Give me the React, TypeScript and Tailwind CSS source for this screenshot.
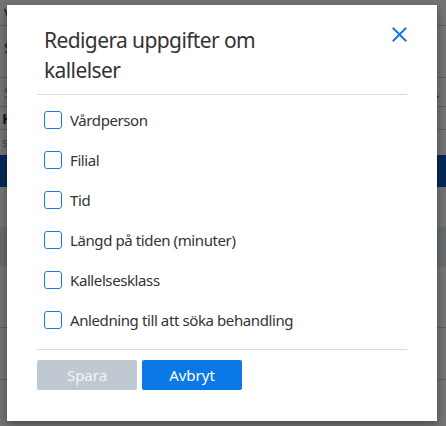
import React from "react";

const fields = [
  "Vårdperson",
  "Filial",
  "Tid",
  "Längd på tiden (minuter)",
  "Kallelsesklass",
  "Anledning till att söka behandling",
];

function PageBehind() {
  return (
    <div className="flex h-[426px] w-[446px] flex-col bg-white text-[15px] text-[#333]">
      <div className="h-[26px] border-b border-[#ccc] pl-[4px] pt-[4px] leading-[18px]">Vas</div>
      <div className="h-[52px] border-b border-[#ccc] pl-[4px] pt-[12px] leading-[18px]">
        <div className="flex justify-between">
          <span>Sds</span>
        </div>
      </div>
      <div className="flex h-[29px] items-center justify-between border-b border-[#ccc] pl-[4px] pr-[6px] text-[#999]">
        <span>Sti</span>
        <svg width="14" height="14" viewBox="0 0 14 14" fill="none" stroke="#1560c0" strokeWidth="1.6">
          <circle cx="5.5" cy="5.5" r="4" />
          <path d="M8.5 8.5 L12.5 12.5" />
        </svg>
      </div>
      <div className="flex h-[23px] items-center border-b border-[#ccc] pl-[2px] font-bold">Klo</div>
      <div className="flex h-[25px] items-center pl-[2px] text-[12px] text-[#999]">s a</div>
      <div className="h-[32px] bg-[#0a5ac0]" />
      <div className="h-[40px]" />
      <div className="h-[40px] bg-[#e5eaf0]" />
      <div className="h-[61px] border-b border-[#ccc]" />
      <div className="h-[52px] border-b border-[#ccc]" />
    </div>
  );
}

function CloseIcon() {
  return (
    <svg width="15" height="15" viewBox="0 0 15 15" fill="none" stroke="#1478e0" strokeWidth="2" strokeLinecap="square">
      <path d="M1.5 1.5 L13.5 13.5 M13.5 1.5 L1.5 13.5" />
    </svg>
  );
}

export default function App() {
  return (
    <div
      className="relative h-[426px] w-[446px] overflow-hidden"
      style={{ fontFamily: '"Noto Sans", "Open Sans", sans-serif' }}
    >
      <PageBehind />
      <div className="absolute inset-0 bg-black/55" />
      <div className="absolute left-[7px] top-[5px] flex h-[416px] w-[430px] flex-col bg-white pl-[30px] pr-[30px] shadow-[0_3px_8px_rgba(0,0,0,0.35)]">
        <div className="flex items-start justify-between pb-[9px] pt-[20px]">
          <h1 className="pl-[7px] text-[21px] font-normal leading-[30px] tracking-[-0.6px] text-[#333]">
            Redigera uppgifter om
            <br />
            kallelser
          </h1>
          <button className="mt-[2px] flex h-[15px] w-[15px] items-center justify-center">
            <CloseIcon />
          </button>
        </div>
        <div className="h-px bg-[#d3dbe3]" />
        <div className="flex flex-col pb-[9px] pt-[5px]">
          {fields.map((f) => (
            <label key={f} className="flex h-[40px] items-center gap-[8px] pl-[7px]">
              <span className="box-border h-[18px] w-[18px] rounded-[3px] border-[1.5px] border-[#1a7be6] bg-white" />
              <span className="text-[15px] leading-[20px] tracking-[-0.4px] text-[#333]">{f}</span>
            </label>
          ))}
        </div>
        <div className="h-px bg-[#d3dbe3]" />
        <div className="flex gap-[5px] pt-[10px]">
          <button className="h-[30px] w-[100px] rounded-[2px] bg-[#c0c8d2] text-[15px] text-[#f3f5f8]">
            Spara
          </button>
          <button className="h-[30px] w-[100px] rounded-[2px] bg-[#0a78e6] text-[15px] text-white">
            Avbryt
          </button>
        </div>
      </div>
    </div>
  );
}
